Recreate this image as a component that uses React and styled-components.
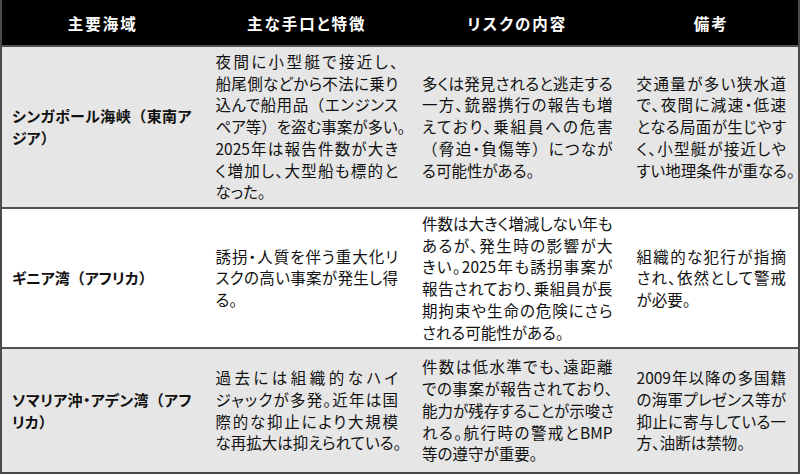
import React from "react";
import styled, { createGlobalStyle } from "styled-components";

const Global = createGlobalStyle`
  html, body { margin: 0; padding: 0; background: #ffffff; }
  body { font-family: "Noto Sans CJK JP", "Noto Sans", sans-serif; }
`;

const Table = styled.table`
  width: 800px;
  border-collapse: collapse;
  table-layout: fixed;
  border-left: 2px solid #4a4a4a;
  border-right: 2px solid #4a4a4a;
  border-bottom: 2px solid #4a4a4a;
`;

const HeadRow = styled.tr`
  height: 46px;
  background: #000000;
`;

const Th = styled.th`
  color: #ffffff;
  font-size: 15.5px;
  font-weight: 700;
  letter-spacing: 2px;
  font-feature-settings: "palt";
  text-align: center;
  vertical-align: middle;
  padding: 0;
`;

const Row = styled.tr`
  height: ${(p) => p.$h}px;
  background: ${(p) => (p.$shade ? "#e6e6e6" : "#ffffff")};
  border-top: 2px solid #505050;
`;

const Td = styled.td`
  font-size: ${(p) => (p.$first ? 15 : 15.5)}px;
  line-height: 21.7px;
  color: #111111;
  vertical-align: middle;
  font-feature-settings: "palt";
  padding: 4px 12px 4px ${(p) => (p.$first ? 10 : 12)}px;
  font-weight: ${(p) => (p.$first ? 700 : 400)};
`;

const Line = styled.span`
  display: block;
  white-space: nowrap;
  text-align: left;
  text-align-last: ${(p) => (p.$last ? "left" : "justify")};
`;

const Bracket = styled.span`
  font-feature-settings: normal;
`;

const rows = [
  {
    h: 162,
    shade: true,
    cells: [
      ["シンガポール海峡（東南ア", "ジア）"],
      [
        "夜間に小型艇で接近し、",
        "船尾側などから不法に乗り",
        "込んで船用品（エンジンス",
        "ペア等）を盗む事案が多い。",
        "2025年は報告件数が大き",
        "く増加し、大型船も標的と",
        "なった。",
      ],
      [
        "多くは発見されると逃走する",
        "一方、銃器携行の報告も増",
        "えており、乗組員への危害",
        "（脅迫・負傷等）につなが",
        "る可能性がある。",
      ],
      [
        "交通量が多い狭水道",
        "で、夜間に減速・低速",
        "となる局面が生じやす",
        "く、小型艇が接近しや",
        "すい地理条件が重なる。",
      ],
    ],
  },
  {
    h: 139,
    shade: false,
    cells: [
      ["ギニア湾（アフリカ）"],
      ["誘拐・人質を伴う重大化リ", "スクの高い事案が発生し得", "る。"],
      [
        "件数は大きく増減しない年も",
        "あるが、発生時の影響が大",
        "きい。2025年も誘拐事案が",
        "報告されており、乗組員が長",
        "期拘束や生命の危険にさら",
        "される可能性がある。",
      ],
      ["組織的な犯行が指摘", "され、依然として警戒", "が必要。"],
    ],
  },
  {
    h: 125,
    shade: true,
    cells: [
      ["ソマリア沖・アデン湾（アフ", "リカ）"],
      [
        "過去には組織的なハイ",
        "ジャックが多発。近年は国",
        "際的な抑止により大規模",
        "な再拡大は抑えられている。",
      ],
      [
        "件数は低水準でも、遠距離",
        "での事案が報告されており、",
        "能力が残存することが示唆さ",
        "れる。航行時の警戒とBMP",
        "等の遵守が重要。",
      ],
      [
        "2009年以降の多国籍",
        "の海軍プレゼンス等が",
        "抑止に寄与している一",
        "方、油断は禁物。",
      ],
    ],
  },
];

const headers = ["主要海域", "主な手口と特徴", "リスクの内容", "備考"];
const widths = [202, 206, 214, 174];

function renderText(t) {
  return t.split(/([（）])/).map((part, i) =>
    part === "（" || part === "）" ? (
      <Bracket key={i}>{part}</Bracket>
    ) : (
      part
    )
  );
}

export default function App() {
  return (
    <>
      <Global />
      <Table>
        <colgroup>
          {widths.map((w, i) => (
            <col key={i} style={{ width: w }} />
          ))}
        </colgroup>
        <thead>
          <HeadRow>
            {headers.map((h) => (
              <Th key={h}>{h}</Th>
            ))}
          </HeadRow>
        </thead>
        <tbody>
          {rows.map((r, i) => (
            <Row key={i} $h={r.h} $shade={r.shade}>
              {r.cells.map((lines, j) => (
                <Td key={j} $first={j === 0}>
                  {lines.map((t, k) => (
                    <Line key={k} $last={k === lines.length - 1}>
                      {renderText(t)}
                    </Line>
                  ))}
                </Td>
              ))}
            </Row>
          ))}
        </tbody>
      </Table>
    </>
  );
}
